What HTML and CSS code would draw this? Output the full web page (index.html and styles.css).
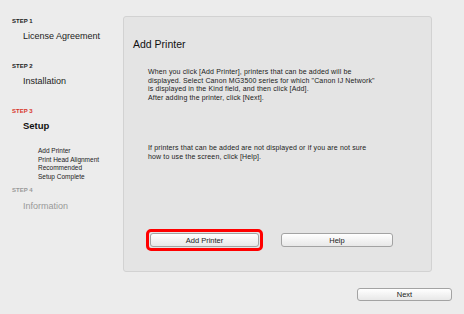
FILE: index.html
```html
<!DOCTYPE html>
<html lang="en">
<head>
    <meta charset="UTF-8">
    <title>Setup - Add Printer</title>
    <link rel="stylesheet" href="styles.css">
</head>
<body>

    <!-- Steps sidebar -->
    <div class="sidebar">
        <div class="step">
            <div class="step-label">STEP 1</div>
            <div class="step-name">License Agreement</div>
        </div>
        <div class="step">
            <div class="step-label">STEP 2</div>
            <div class="step-name">Installation</div>
        </div>
        <div class="step current">
            <div class="step-label">STEP 3</div>
            <div class="step-name">Setup</div>
            <ul class="substeps">
                <li>Add Printer</li>
                <li>Print Head Alignment<br>Recommended</li>
                <li>Setup Complete</li>
            </ul>
        </div>
        <div class="step pending">
            <div class="step-label">STEP 4</div>
            <div class="step-name">Information</div>
        </div>
    </div>

    <!-- Main area -->
    <div class="main">
        <div class="panel">
            <h1>Add Printer</h1>
            <p class="intro">
                When you click [Add Printer], printers that can be added will be<br>
                displayed. Select Canon MG3500 series for which "Canon IJ Network"<br>
                is displayed in the Kind field, and then click [Add].<br>
                After adding the printer, click [Next].
            </p>
            <p class="note">
                If printers that can be added are not displayed or if you are not sure<br>
                how to use the screen, click [Help].
            </p>
            <div class="actions">
                <span class="highlight"><button class="btn btn-add">Add Printer</button></span>
                <button class="btn btn-help">Help</button>
            </div>
        </div>
        <div class="footer">
            <button class="btn btn-next">Next</button>
        </div>
    </div>

</body>
</html>
```

FILE: styles.css
```css
* {
    margin: 0;
    padding: 0;
    box-sizing: border-box;
    font-family: 'Liberation Sans', Arial, sans-serif;
}

body {
    display: flex;
    width: 464px;
    height: 314px;
    background-color: #ececec;
    color: #222;
    overflow: hidden;
}

/* Sidebar */
.sidebar {
    width: 123px;
    flex-shrink: 0;
    padding: 17px 0 0 12px;
}

.step {
    margin-bottom: 20px;
}

.step-label {
    font-size: 6px;
    font-weight: bold;
    line-height: 8px;
    color: #222;
}

.step-name {
    margin: 5px 0 0 11px;
    font-size: 9px;
    line-height: 12px;
    color: #222;
}

.step.current {
    margin-bottom: 5px;
}

.step.current .step-label {
    color: #d8352b;
}

.step.current .step-name {
    font-size: 9.5px;
    font-weight: bold;
    color: #111;
}

.substeps {
    list-style: none;
    margin: 15px 0 0 26px;
}

.substeps li {
    font-size: 6.5px;
    line-height: 8px;
    margin-bottom: 1px;
}

.step.pending .step-label,
.step.pending .step-name {
    color: #999;
}

.step.pending .step-name {
    margin-top: 6px;
}

/* Main */
.main {
    flex: 1;
    padding: 16px 12px 0 0;
    display: flex;
    flex-direction: column;
}

.panel {
    width: 309px;
    height: 256px;
    background: #e4e4e4;
    border: 1px solid #d2d2d2;
    border-radius: 3px;
    padding: 20px 0 0 9px;
    display: flex;
    flex-direction: column;
}

.panel h1 {
    font-size: 10.5px;
    font-weight: normal;
    line-height: 14px;
    color: #111;
}

.intro,
.note {
    margin-left: 15px;
    font-size: 7px;
    letter-spacing: 0.14px;
    line-height: 8.7px;
    color: #222;
}

.intro {
    margin-top: 17px;
}

.note {
    margin-top: 41px;
}

.actions {
    margin-top: auto;
    margin-bottom: 20px;
    display: flex;
    align-items: center;
    gap: 18px;
    padding-left: 13px;
}

.highlight {
    display: inline-block;
    border: 3px solid #f00;
    border-radius: 5px;
    padding: 1px;
}

.btn {
    display: block;
    height: 14px;
    border: 1px solid #a3a3a3;
    border-radius: 3px;
    background: linear-gradient(#ffffff, #f1f1f1 60%, #e8e8e8);
    font-size: 7.5px;
    color: #222;
    cursor: pointer;
}

.btn-add {
    width: 109px;
}

.btn-help {
    width: 112px;
}

.footer {
    display: flex;
    justify-content: flex-end;
    margin-top: 16px;
}

.btn-next {
    width: 95px;
    height: 13px;
}
```
